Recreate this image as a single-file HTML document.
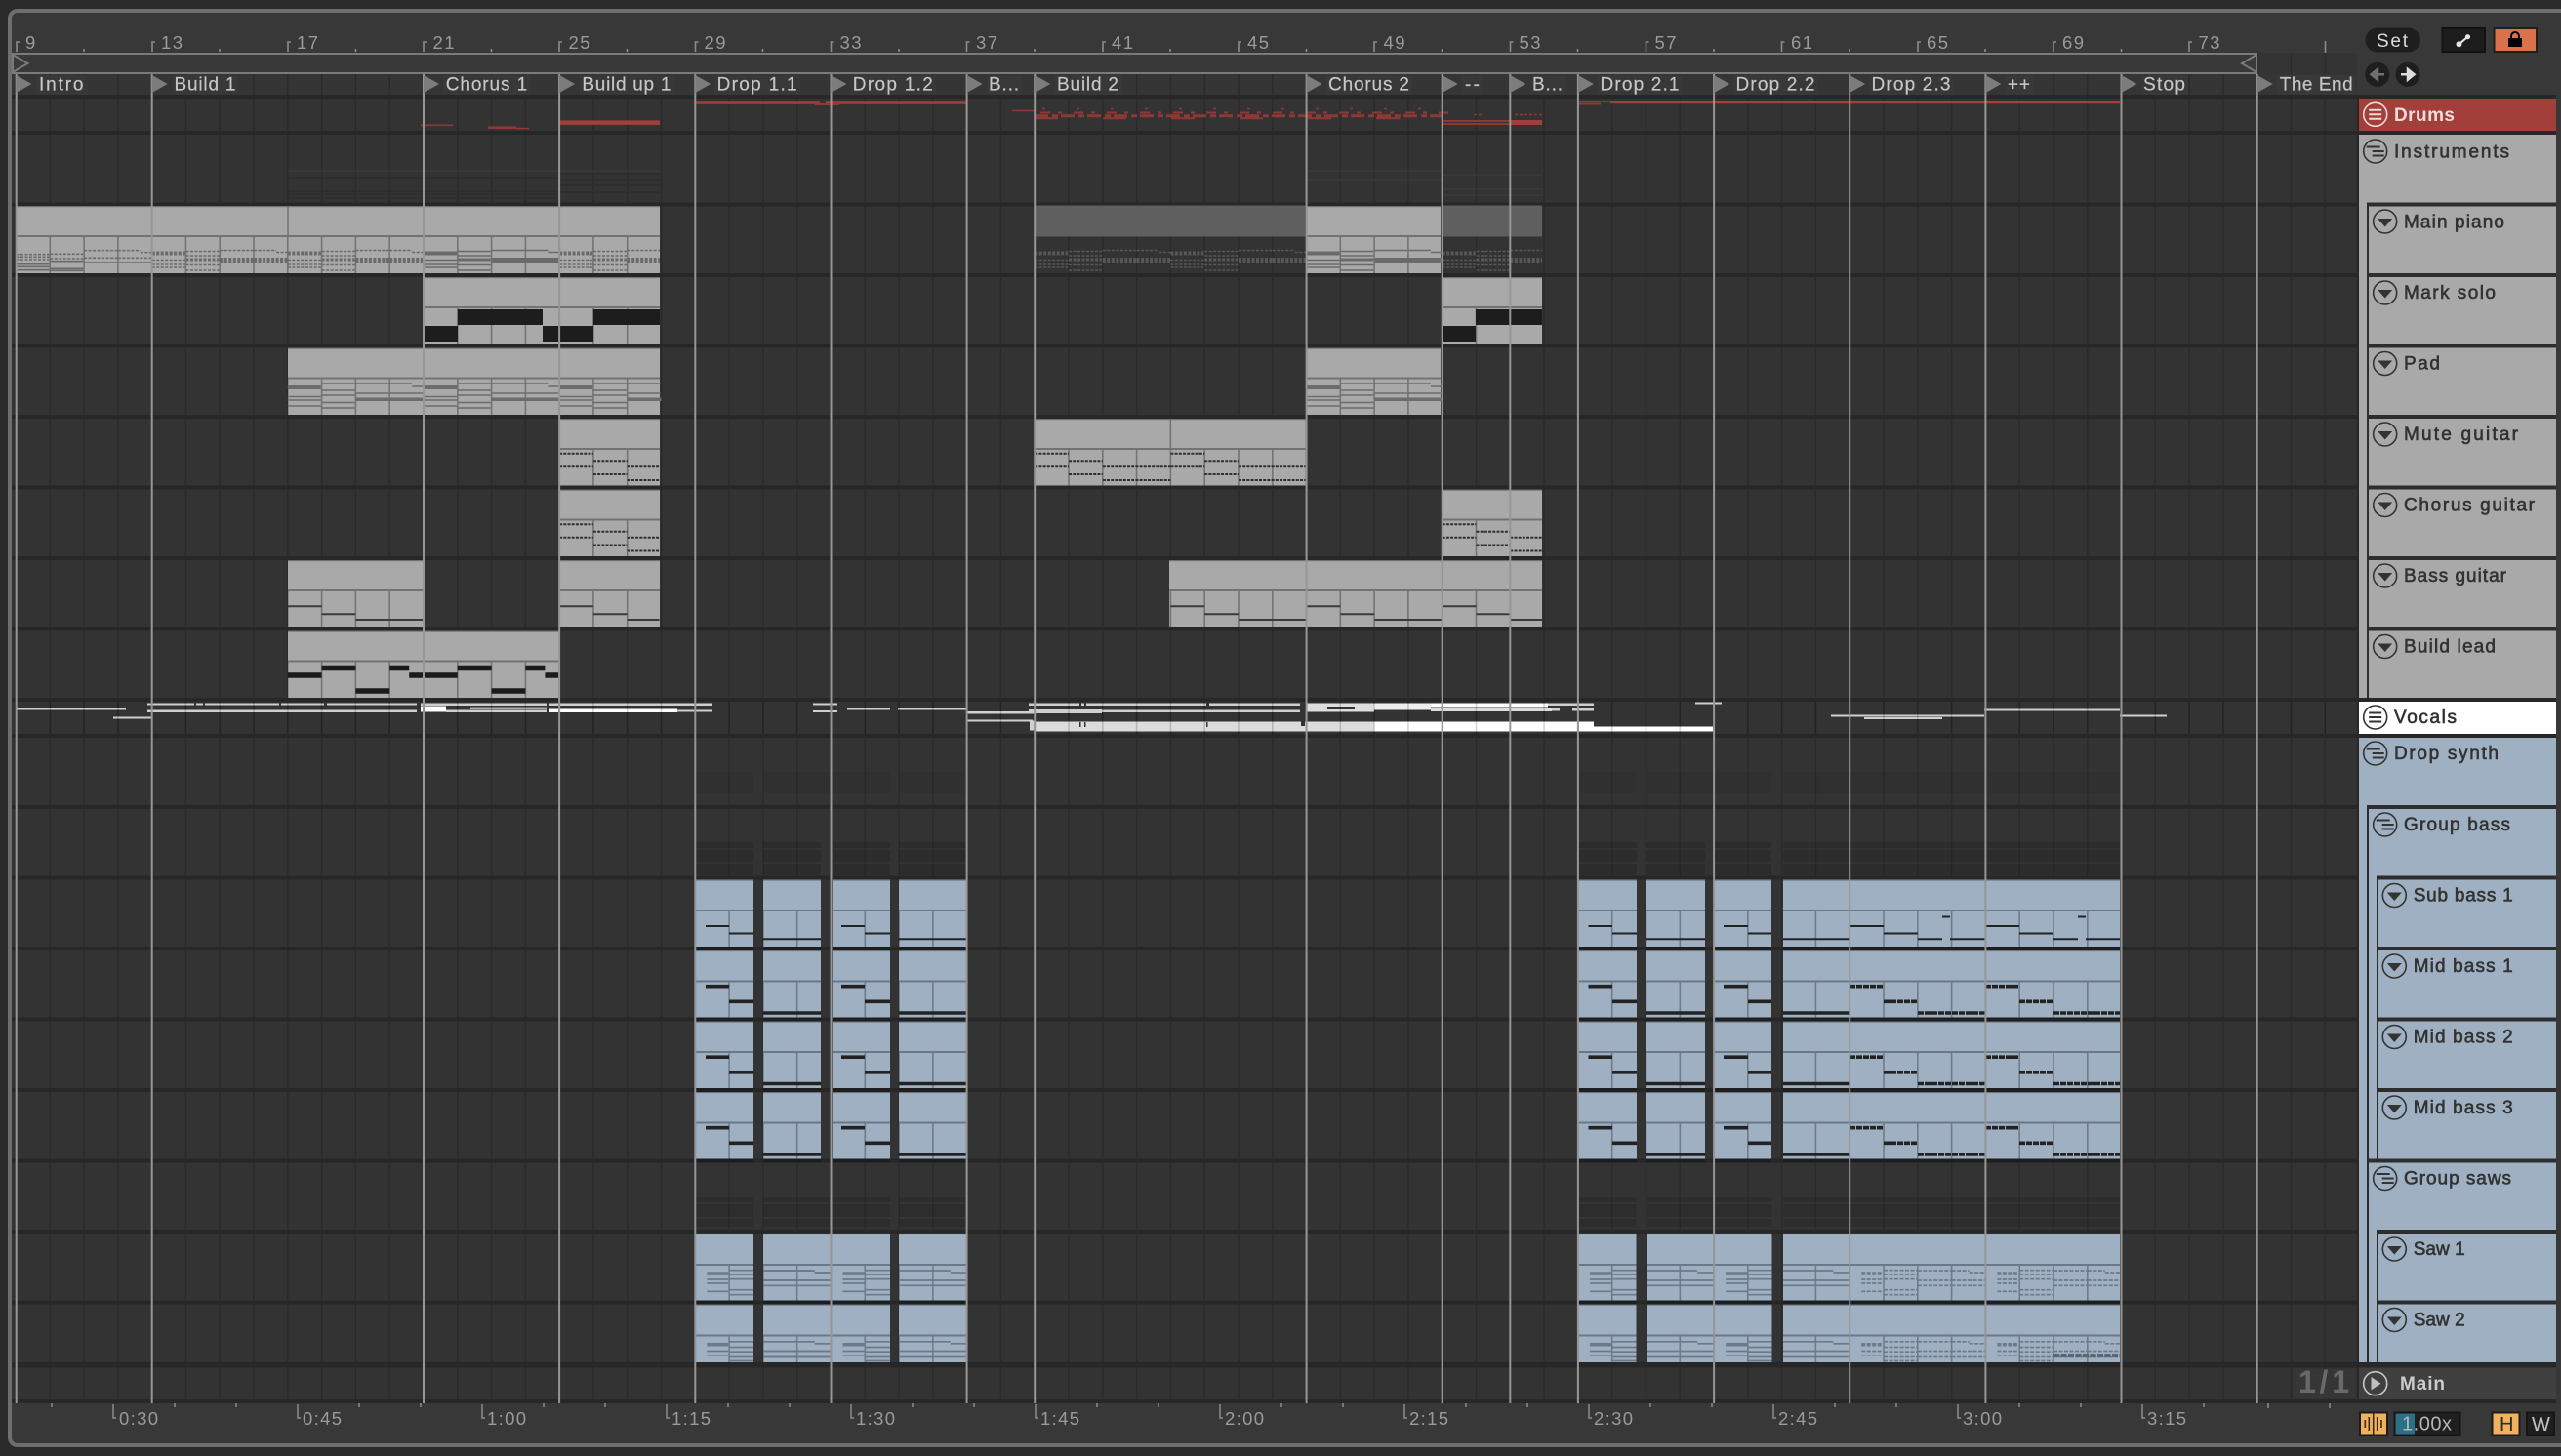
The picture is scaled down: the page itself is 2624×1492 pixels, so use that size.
<!DOCTYPE html>
<html><head><meta charset="utf-8"><title>Arrangement</title>
<style>
html,body{margin:0;padding:0;background:#2b2b2b;width:2624px;height:1492px;overflow:hidden}
svg{display:block;font-family:"Liberation Sans",sans-serif}
.l{font-size:19px;fill:#c6c6c6;stroke:#c6c6c6;stroke-width:.2}
.n{font-size:18.5px;fill:#9a9a9a}
.t{font-size:19px;fill:#333;stroke:#333;stroke-width:.6}
.i{fill:none;stroke:#333;stroke-width:1.6}
</style></head><body>
<svg xmlns="http://www.w3.org/2000/svg" width="2624" height="1492" viewBox="0 0 2624 1492">
<defs>
<path id="v" fill="none" d="M16.5 0V1500M51.3 0V1500M86.1 0V1500M120.9 0V1500M155.7 0V1500M190.4 0V1500M225.2 0V1500M260 0V1500M294.8 0V1500M329.6 0V1500M364.4 0V1500M399.2 0V1500M434 0V1500M468.8 0V1500M503.6 0V1500M538.4 0V1500M573.1 0V1500M607.9 0V1500M642.7 0V1500M677.5 0V1500M712.3 0V1500M747.1 0V1500M781.9 0V1500M816.7 0V1500M851.5 0V1500M886.3 0V1500M921.1 0V1500M955.9 0V1500M990.6 0V1500M1025.4 0V1500M1060.2 0V1500M1095 0V1500M1129.8 0V1500M1164.6 0V1500M1199.4 0V1500M1234.2 0V1500M1269 0V1500M1303.8 0V1500M1338.6 0V1500M1373.3 0V1500M1408.1 0V1500M1442.9 0V1500M1477.7 0V1500M1512.5 0V1500M1547.3 0V1500M1582.1 0V1500M1616.9 0V1500M1651.7 0V1500M1686.5 0V1500M1721.3 0V1500M1756.1 0V1500M1790.8 0V1500M1825.6 0V1500M1860.4 0V1500M1895.2 0V1500M1930 0V1500M1964.8 0V1500M1999.6 0V1500M2034.4 0V1500M2069.2 0V1500M2104 0V1500M2138.8 0V1500M2173.5 0V1500M2208.3 0V1500M2243.1 0V1500M2277.9 0V1500M2312.7 0V1500M2347.5 0V1500M2382.3 0V1500"/>
<clipPath id="gridC"><rect x="14" y="76" width="2401" height="1362"/><rect x="2313" y="54" width="102" height="22"/></clipPath>
<clipPath id="vocC"><rect x="14" y="719" width="2400" height="33"/></clipPath>
<clipPath id="grayN">
<rect x="16.5" y="243" width="659.5" height="37"/><rect x="1338.6" y="243" width="137.4" height="37"/>
<rect x="434" y="316" width="242" height="36.5"/><rect x="1478" y="316" width="102" height="36.5"/>
<rect x="295" y="388.5" width="381" height="36.5"/><rect x="1338.6" y="388.5" width="137.4" height="36.5"/>
<rect x="573" y="461" width="103" height="36.5"/><rect x="1060" y="461" width="277" height="36.5"/>
<rect x="573" y="533.5" width="103" height="36.5"/><rect x="1478" y="533.5" width="102" height="36.5"/>
<rect x="295" y="606" width="139" height="36.5"/><rect x="573" y="606" width="103" height="36.5"/><rect x="1198" y="606" width="382" height="36.5"/>
<rect x="295" y="678.5" width="278" height="36.5"/>
</clipPath>
<clipPath id="blueN">
<rect x="713" y="934" width="1460" height="36"/><rect x="713" y="1006" width="1460" height="36.5"/><rect x="713" y="1079" width="1460" height="36"/><rect x="713" y="1151.5" width="1460" height="36"/><rect x="713" y="1296" width="1460" height="36.5"/><rect x="713" y="1368.5" width="1460" height="27.5"/>
</clipPath>
<clipPath id="sawX">
<rect x="713" y="1200" width="59" height="200"/><rect x="782" y="1200" width="130" height="200"/><rect x="921" y="1200" width="69" height="200"/><rect x="1617" y="1200" width="59.5" height="200"/><rect x="1688" y="1200" width="127.5" height="200"/><rect x="1827" y="1200" width="345" height="200"/>
</clipPath>
<clipPath id="pianoX"><rect x="16.5" y="200" width="659.5" height="80"/><rect x="1060" y="200" width="520" height="80"/></clipPath>
<clipPath id="blueB">
<rect x="713" y="934" width="59" height="254"/><rect x="782" y="934" width="59" height="254"/><rect x="853" y="934" width="59" height="254"/><rect x="921" y="934" width="69" height="254"/><rect x="1617" y="934" width="60" height="254"/><rect x="1687" y="934" width="60" height="254"/><rect x="1757" y="934" width="58" height="254"/><rect x="1827" y="934" width="345" height="254"/>
<rect x="713" y="1296" width="59" height="100"/><rect x="782" y="1296" width="130" height="100"/><rect x="921" y="1296" width="69" height="100"/><rect x="1617" y="1296" width="59.5" height="100"/><rect x="1688" y="1296" width="127.5" height="100"/><rect x="1827" y="1296" width="345" height="100"/>
</clipPath>

<path id="rngB" fill="none" d="M713 0H772M782 0H841M853 0H912M921 0H990M1617 0H1677M1687 0H1747M1757 0H1815M1827 0H2172"/>
<path id="rngS" fill="none" d="M713 0H772M782 0H912M921 0H990M1617 0H1676.5M1688 0H1815.5M1827 0H2172"/>

<!-- piano bars -->
<g id="a1" fill="none"><path stroke-dasharray="3 1.5" d="M0 49.7H34M0 52.3H34M0 55H34"/><path d="M0 59.7H34M0 62.3H34M0 65.7H34"/></g>
<g id="b1" fill="none"><path stroke-dasharray="3 1.5" d="M0 49.3H34M0 54H34"/><path d="M0 56.7H34M0 64.3H34M0 66.3H34"/></g>
<g id="c1" fill="none"><path stroke-dasharray="3 1.5" d="M0 45.7H34M0 53.3H34"/><path d="M0 58H34"/></g>
<g id="d1" fill="none"><path stroke-dasharray="3 1.5" d="M0 45.7H23M23 47.7H34.8M0 53.3H34"/><path d="M0 58H34.8"/></g>
<g id="a" fill="none"><path stroke-width="4" d="M0 48.5H34"/><path d="M0 55.5H34M0 60H34M0 63H34"/></g>
<g id="b" fill="none"><path d="M0 46.5H34M0 51H34M0 60.5H34M0 66H34"/><path stroke-width="3" d="M0 55H34"/></g>
<g id="c" fill="none"><path d="M0 45.5H34"/><path stroke-width="5" d="M0 55.5H34.8"/></g>
<g id="d" fill="none"><path d="M0 45.5H23M23 47.5H34.8"/><path stroke-width="5" d="M0 55.5H34.8"/></g>
<g id="P"><use href="#a"/><use href="#b" x="34.8"/><use href="#c" x="69.6"/><use href="#d" x="104.4"/></g>
<g id="P3"><use href="#a"/><use href="#b" x="34.8"/><use href="#c" x="69.6"/></g>
<!-- pad -->
<g id="pa" fill="none"><path stroke-width="4" d="M0 40.5H34"/><path d="M0 50H34M0 53.5H34M0 59.5H34"/></g>
<g id="pb" fill="none"><path d="M0 36.5H34M0 43.5H34M0 48.5H34M0 56H34M0 61.5H34"/></g>
<g id="pc" fill="none"><path d="M0 36.5H34M0 46.5H34"/><path stroke-width="3.5" d="M0 52.8H34.8"/></g>
<g id="pd" fill="none"><path d="M0 36.5H23M23 39.5H34M0 46.5H34"/><path stroke-width="3.5" d="M0 52.8H34.8"/></g>
<g id="Q"><use href="#pa"/><use href="#pb" x="34.8"/><use href="#pc" x="69.6"/><use href="#pd" x="104.4"/></g>
<g id="Q3"><use href="#pa"/><use href="#pb" x="34.8"/><use href="#pc" x="69.6"/></g>
<!-- saws -->
<g id="sa" fill="none"><path stroke-width="3.5" d="M12 41H34"/><path d="M12 47H34M12 51H34M12 59.3H34"/></g>
<g id="sb" fill="none"><path d="M0 37.7H34M0 42H34M0 46.7H34M0 57.7H34M0 62.7H34"/></g>
<g id="sc" fill="none"><path d="M0 38H34.8M0 48H34.8M0 53.3H34.8"/></g>
<g id="sd" fill="none"><path d="M0 38H18M18 40H34.8M0 48H34.8M0 53.3H34.8"/></g>
<g id="S4"><use href="#sa"/><use href="#sb" x="34.8"/><use href="#sc" x="69.6"/><use href="#sd" x="104.4"/></g>
<g id="ta" fill="none"><path stroke-width="3.5" d="M12 41.3H34"/><path d="M12 48H34M12 52.3H34"/></g>
<g id="tb" fill="none"><path d="M0 38.3H34M0 44H34M0 48.7H34M0 54H34M0 58H34"/></g>
<g id="tc" fill="none"><path d="M0 38.3H34.8M0 48H34.8M0 54H34.8"/></g>
<g id="td" fill="none"><path d="M0 38.3H18M18 40.3H34.8M0 48H34.8M0 54H34.8"/></g>
<g id="T4"><use href="#ta"/><use href="#tb" x="34.8"/><use href="#tc" x="69.6"/><use href="#td" x="104.4"/></g>
<g id="Sall"><use href="#S4" x="712.3"/><use href="#sc" x="781.9"/><use href="#sd" x="816.7"/><use href="#sa" x="851.5"/><use href="#sb" x="886.3"/><use href="#sc" x="921.1"/><use href="#sd" x="955.9"/><use href="#sa" x="1616.9"/><use href="#sb" x="1651.7"/><use href="#sc" x="1686.5"/><use href="#sd" x="1721.3"/><use href="#sa" x="1756.1"/><use href="#sb" x="1790.8"/><use href="#sc" x="1825.6"/><use href="#sd" x="1860.4"/><g stroke-dasharray="4 1.5"><use href="#S4" x="1895.2"/><use href="#S4" x="2034.4"/></g></g>
<g id="Tall"><use href="#T4" x="712.3"/><use href="#tc" x="781.9"/><use href="#td" x="816.7"/><use href="#ta" x="851.5"/><use href="#tb" x="886.3"/><use href="#tc" x="921.1"/><use href="#td" x="955.9"/><use href="#ta" x="1616.9"/><use href="#tb" x="1651.7"/><use href="#tc" x="1686.5"/><use href="#td" x="1721.3"/><use href="#tb" x="1790.8"/><use href="#ta" x="1756.1"/><use href="#tc" x="1825.6"/><use href="#td" x="1860.4"/><g stroke-dasharray="4 1.5"><use href="#T4" x="1895.2"/><use href="#T4" x="2034.4"/></g></g>
<!-- guitar -->
<path id="mg" fill="none" stroke-dasharray="3 1.2" d="M0 35.7H34.8M0 49.3H34.8M34.8 43.3H69.6M34.8 57H69.6M69.6 49.3H139M69.6 63H139"/>
<path id="mg3" fill="none" stroke-dasharray="3 1.2" d="M0 35.7H34.8M0 49.3H34.8M34.8 43.3H69.6M34.8 57H69.6M69.6 49.3H102.5M69.6 63H102.5"/>
<path id="bs" fill="none" d="M0 47.3H34.8M34.8 55.3H69.6M69.6 61H139"/>
<path id="bs3" fill="none" d="M0 47.3H34.8M34.8 55.3H69.6M69.6 61H102.5"/>
<path id="lead" fill="none" d="M0 45.5H34.8M34.8 38H69.6M69.6 61.5H104.4M104.4 38H124.4M124.4 45.5H139"/>
<!-- bass -->
<path id="bThin" fill="none" d="M723 47.5H747M747 55H772M782 60.8H841M862 47.5H886M886 55H912M921 60.8H990M1627.5 47.5H1652M1652 55H1677M1687 60.8H1747M1766 47.5H1791M1791 55H1815M1827 60.8H1895M1895 47.5H1930M1930 55H1965M1965 60.8H1990M1990 38H1998M1998 60.8H2034M2034 47.5H2069M2069 55H2104M2104 60.8H2129M2129 38H2137M2137 60.8H2172"/>
<path id="bFat" fill="none" d="M723 36.7H747M747 52.3H772M782 64H841M862 36.7H886M886 52.3H912M921 64H990M1627.5 36.7H1652M1652 52.3H1677M1687 64H1747M1766 36.7H1791M1791 52.3H1815M1827 64H1895"/>
<path id="bDash" fill="none" stroke-dasharray="6 1" d="M1895 36.7H1930M1930 52.3H1964M1965 64H2034M2034 36.7H2069M2069 52.3H2103M2104 64H2172"/>
<!-- icons -->
<g id="iEq" fill="none"><circle r="12"/><path d="M-6.5 -4.5H6.5M-6.5 0H6.5M-6.5 4.5H6.5" stroke-width="2"/></g>
<g id="iGr" fill="none"><circle r="12"/><path d="M-9 -4.5H5M-3 0H9M-3 4.5H9" stroke-width="2"/></g>
<g id="iDn"><circle r="12" fill="none"/><path d="M-7.5 -3H7.5L0 5.5Z" fill="#333" stroke="none"/></g>
</defs>

<!-- frame -->
<rect width="2624" height="1492" fill="#2b2b2b"/>
<rect x="10" y="11" width="2700" height="1470" rx="8" fill="#383838" stroke="#6e6e6e" stroke-width="4"/>

<!-- grid -->
<rect x="12" y="97" width="2403" height="1341" fill="#333333"/>
<rect x="12" y="76" width="2403" height="21" fill="#353535"/>
<rect x="2313" y="54" width="102" height="22" fill="#343434"/>
<use href="#v" stroke="#2a2a2a" stroke-width="1.4" clip-path="url(#gridC)"/>
<g fill="#272727">
<rect x="12" y="97" width="2403" height="4"/><rect x="12" y="134" width="2403" height="4"/><rect x="12" y="207.5" width="2403" height="4"/><rect x="12" y="280" width="2403" height="4"/><rect x="12" y="352.5" width="2403" height="4"/><rect x="12" y="425" width="2403" height="4"/><rect x="12" y="497.5" width="2403" height="4"/><rect x="12" y="570" width="2403" height="4"/><rect x="12" y="642.5" width="2403" height="4"/><rect x="12" y="715" width="2403" height="4"/><rect x="12" y="752" width="2403" height="4"/><rect x="12" y="825" width="2403" height="4"/><rect x="12" y="897.5" width="2403" height="4"/><rect x="12" y="970" width="2403" height="4"/><rect x="12" y="1042.5" width="2403" height="4"/><rect x="12" y="1115" width="2403" height="4"/><rect x="12" y="1187.5" width="2403" height="4"/><rect x="12" y="1260" width="2403" height="4"/><rect x="12" y="1332.5" width="2403" height="4"/><rect x="12" y="1396" width="2403" height="5.5"/><rect x="12" y="1434" width="2403" height="4"/>
</g>

<!-- top ruler -->
<g stroke="#8c8c8c" stroke-width="1.6" fill="none">
<path d="M17 53V43h3M156 53V43h3M295 53V43h3M434 53V43h3M573 53V43h3M712.5 53V43h3M851.5 53V43h3M990.5 53V43h3M1130 53V43h3M1269 53V43h3M1408 53V43h3M1547.5 53V43h3M1686.5 53V43h3M1825.5 53V43h3M1965 53V43h3M2104 53V43h3M2243 53V43h3M2382.5 54V42"/>
<path d="M86 53V50M225 53V50M364.5 53V50M503.5 53V50M642.5 53V50M781.5 53V50M921 53V50M1060 53V50M1199 53V50M1338.5 53V50M1477.5 53V50M1616.5 53V50M1756 53V50M1895 53V50M2034 53V50M2173.5 53V50"/>
</g>
<text class="n" x="26" y="50">9</text><text class="n" x="165" y="50" textLength="22">13</text><text class="n" x="304" y="50" textLength="22">17</text><text class="n" x="443.5" y="50" textLength="22">21</text><text class="n" x="582.5" y="50" textLength="22">25</text><text class="n" x="721.5" y="50" textLength="22">29</text><text class="n" x="860.5" y="50" textLength="22">33</text><text class="n" x="1000" y="50" textLength="22">37</text><text class="n" x="1139" y="50" textLength="22">41</text><text class="n" x="1278" y="50" textLength="22">45</text><text class="n" x="1417.5" y="50" textLength="22">49</text><text class="n" x="1556.5" y="50" textLength="22">53</text><text class="n" x="1695.5" y="50" textLength="22">57</text><text class="n" x="1835" y="50" textLength="22">61</text><text class="n" x="1974" y="50" textLength="22">65</text><text class="n" x="2113" y="50" textLength="22">69</text><text class="n" x="2252.5" y="50" textLength="22">73</text>
<!-- loop brace -->
<path d="M13 55H2312V75H13Z" fill="#383838" stroke="#7a7a7a" stroke-width="2"/>
<path d="M13 56L28.5 65L13 74Z" fill="#3a3a3a" stroke="#7a7a7a" stroke-width="2"/>
<path d="M2312 56L2297 65L2312 74Z" fill="#3a3a3a" stroke="#7a7a7a" stroke-width="2"/>

<!-- drums notes -->
<g fill="none" stroke="#8f3834">
<path stroke-width="1.6" d="M431 128.3H464"/><path stroke-width="2.6" d="M500 130.7H529"/><path stroke-width="1.6" d="M529 131.6H542"/>
<path stroke="#a33e3a" stroke-width="4.5" d="M574 125.6H676"/>
<path stroke="#a33e3a" stroke-width="2.6" d="M712 105.5H840M846 105.5H990"/><path stroke-width="2" d="M835 107H860"/>
<path stroke="#a33e3a" stroke-width="2.6" d="M1650 105H2172"/><path stroke-width="2" d="M1617 104H1650M1617 106.5H1640"/>
<path stroke-width="1.6" d="M1037 113.5H1060"/>
<path stroke-width="3" stroke-dasharray="14 4 6 3" d="M1060 118.7H1478"/>
<path stroke-width="2" stroke-dasharray="10 8 4 12" d="M1066 115.5H1490"/>
<path stroke-width="2" stroke-dasharray="24 46" d="M1060 121.2H1478"/>
<path stroke-width="1.5" stroke-dasharray="3 32" d="M1068 111.5H1470"/>
<path stroke-width="2" d="M1478 124H1547M1478 127H1547"/><path stroke="#a33e3a" stroke-width="5" d="M1547 125.5H1580"/>
<path stroke-width="1.6" stroke-dasharray="3 2" d="M1510 117.5H1518M1552 117.5H1580"/>
</g>
<!-- faint -->
<g fill="none">
<path stroke="#2d2d2d" stroke-width="1.5" d="M295 182H574M295 196H573M295 199H573M295 203H573M574 178H676M574 184H676M574 190H676M574 197H676"/>
<path stroke="#3a3a3a" stroke-width="1.5" d="M295 175H676M1338 175H1478M1338 184H1478M1478 179H1580M1478 194H1580M1478 200H1580"/>
<use href="#rngS" y="802" stroke="#000" stroke-opacity=".06" stroke-width="22"/>
<use href="#rngB" y="880" stroke="#000" stroke-opacity=".13" stroke-width="34"/>
<use href="#rngB" y="870" stroke="#fff" stroke-opacity=".04" stroke-width="2"/>
<use href="#rngB" y="884" stroke="#fff" stroke-opacity=".04" stroke-width="2"/>
<use href="#rngS" y="1242" stroke="#000" stroke-opacity=".11" stroke-width="30"/>
<use href="#rngS" y="1233" stroke="#fff" stroke-opacity=".04" stroke-width="2"/>
<use href="#rngS" y="1248" stroke="#fff" stroke-opacity=".04" stroke-width="2"/>
</g>

<!-- gray clips -->
<g fill="#a9a9a9">
<rect x="16.5" y="212" width="659.5" height="68"/><rect x="1338.6" y="212" width="137.4" height="68"/>
<rect x="434" y="285" width="242" height="67.5"/><rect x="1478" y="285" width="102" height="67.5"/>
<rect x="295" y="357.5" width="381" height="67.5"/><rect x="1338.6" y="357.5" width="137.4" height="67.5"/>
<rect x="573" y="430" width="103" height="67.5"/><rect x="1060" y="430" width="277.5" height="67.5"/>
<rect x="573" y="502.5" width="103" height="67.5"/><rect x="1478" y="502.5" width="102" height="67.5"/>
<rect x="295" y="575" width="139" height="67.5"/><rect x="573" y="575" width="103" height="67.5"/><rect x="1198" y="575" width="382" height="67.5"/>
<rect x="295" y="647.5" width="278" height="67.5"/>
</g>
<g fill="#5f5f5f"><rect x="1060.5" y="210.5" width="277" height="32"/><rect x="1478" y="210.5" width="102" height="32"/></g>
<g fill="#727272">
<rect x="16.5" y="241" width="659.5" height="2"/><rect x="1338.6" y="241" width="137.4" height="2"/>
<rect x="434" y="314" width="242" height="2"/><rect x="1478" y="314" width="102" height="2"/>
<rect x="295" y="386.5" width="381" height="2"/><rect x="1338.6" y="386.5" width="137.4" height="2"/>
<rect x="573" y="459" width="103" height="2"/><rect x="1060" y="459" width="277.5" height="2"/>
<rect x="573" y="531.5" width="103" height="2"/><rect x="1478" y="531.5" width="102" height="2"/>
<rect x="295" y="604" width="139" height="2"/><rect x="573" y="604" width="103" height="2"/><rect x="1198" y="604" width="382" height="2"/>
<rect x="295" y="676.5" width="278" height="2"/>
<rect x="16.5" y="211" width="659.5" height="1.2"/><rect x="1338.6" y="211" width="137.4" height="1.2"/>
<rect x="434" y="284" width="242" height="1.2"/><rect x="1478" y="284" width="102" height="1.2"/>
<rect x="295" y="356.5" width="381" height="1.2"/><rect x="1338.6" y="356.5" width="137.4" height="1.2"/>
<rect x="573" y="429" width="103" height="1.2"/><rect x="1060" y="429" width="277.5" height="1.2"/>
<rect x="573" y="501.5" width="103" height="1.2"/><rect x="1478" y="501.5" width="102" height="1.2"/>
<rect x="295" y="574" width="139" height="1.2"/><rect x="573" y="574" width="103" height="1.2"/><rect x="1198" y="574" width="382" height="1.2"/>
<rect x="295" y="646.5" width="278" height="1.2"/>
<rect x="294.3" y="212" width="1.5" height="30"/><rect x="1198.6" y="430" width="1.5" height="30"/><rect x="433.4" y="647" width="1.5" height="30"/>
</g>
<use href="#v" stroke="#747474" stroke-width="1.6" clip-path="url(#grayN)"/>

<!-- piano -->
<g stroke="#6a6a6a" stroke-width="1.6" clip-path="url(#pianoX)">
<g transform="translate(0 211)">
<use href="#a1" x="16.5"/><use href="#b1" x="51.3"/><use href="#c1" x="86.1"/><use href="#d1" x="120.9"/>
<g stroke-dasharray="3 1.5"><use href="#P" x="155.7"/><use href="#P" x="294.8"/><use href="#P3" x="573.1"/></g>
<use href="#P" x="434"/><use href="#P" x="1338.6"/>
<g stroke="#575757" stroke-dasharray="3 1.5"><use href="#P" x="1060.2"/><use href="#P" x="1199.4"/><use href="#P3" x="1477.7"/></g>
</g></g>
<!-- mark solo -->
<path fill="none" stroke="#1d1d1d" stroke-width="16" d="M434 342H469M469 325H556M556 342H608M608 325H676M1478 342H1512M1512 325H1580"/>
<!-- pad -->
<g stroke="#6c6c6c" stroke-width="1.6" transform="translate(0 356.5)">
<use href="#Q" x="294.8"/><use href="#Q" x="434"/><use href="#Q3" x="573.1"/><use href="#Q" x="1338.6"/>
</g>
<!-- guitars -->
<g stroke="#303030" stroke-width="2">
<use href="#mg3" x="573.1" y="429"/><use href="#mg" x="1060.2" y="429"/><use href="#mg" x="1199.4" y="429"/>
<use href="#mg3" x="573.1" y="501.5"/><use href="#mg3" x="1477.7" y="501.5"/>
</g>
<g stroke="#3a3a3a" stroke-width="2">
<use href="#bs" x="294.8" y="574"/><use href="#bs3" x="573.1" y="574"/><use href="#bs" x="1199.4" y="574"/><use href="#bs" x="1338.6" y="574"/><use href="#bs3" x="1477.7" y="574"/>
</g>
<g stroke="#1b1b1b" stroke-width="5.5">
<use href="#lead" x="294.8" y="646.5"/><use href="#lead" x="434" y="646.5"/>
</g>

<!-- blue clips -->
<g fill="#9fb0c2">
<g id="blueRow"><rect x="713" y="902.5" width="59" height="67.5"/><rect x="782" y="902.5" width="59" height="67.5"/><rect x="853" y="902.5" width="59" height="67.5"/><rect x="921" y="902.5" width="69" height="67.5"/><rect x="1617" y="902.5" width="60" height="67.5"/><rect x="1687" y="902.5" width="60" height="67.5"/><rect x="1757" y="902.5" width="58" height="67.5"/><rect x="1827" y="902.5" width="345" height="67.5"/></g>
<use href="#blueRow" y="72.5"/><use href="#blueRow" y="145"/><use href="#blueRow" y="217.5"/>
<g clip-path="url(#sawX)"><rect x="700" y="1265" width="1480" height="67.5"/><rect x="700" y="1337.5" width="1480" height="58.5"/></g>
</g>
<g fill="none" stroke="#6b7886" stroke-width="2">
<use href="#rngB" y="933"/><use href="#rngB" y="1005.5"/><use href="#rngB" y="1078"/><use href="#rngB" y="1150.5"/><use href="#rngS" y="1296"/><use href="#rngS" y="1368.5"/>
</g>
<g fill="none" stroke="#6b7886" stroke-width="1.2">
<use href="#rngB" y="902"/><use href="#rngB" y="974.5"/><use href="#rngB" y="1047"/><use href="#rngB" y="1119.5"/><use href="#rngS" y="1264.5"/><use href="#rngS" y="1337"/>
</g>
<g clip-path="url(#blueB)"><use href="#v" stroke="#6f7c8a" stroke-width="1.6" clip-path="url(#blueN)"/></g>
<!-- bass notes -->
<g stroke="#222">
<use href="#bThin" y="901.5" stroke-width="2"/>
<g stroke-width="3.6">
<use href="#bFat" y="974"/><use href="#bFat" y="1046.5"/><use href="#bFat" y="1119"/>
<use href="#bDash" y="974"/><use href="#bDash" y="1046.5"/><use href="#bDash" y="1119"/>
</g>
</g>
<!-- saw notes -->
<g clip-path="url(#sawX)" stroke="#6c7a88" stroke-width="1.7">
<use href="#Sall" y="1264"/><use href="#Tall" y="1336.5"/>
<path stroke="#5a6672" stroke-width="4" stroke-dasharray="6 1.5" d="M2104 1389H2172"/>
</g>
<g stroke="#1e1e1e" stroke-width="4" fill="none">
<use href="#rngB" y="972"/><use href="#rngB" y="1044.5"/><use href="#rngB" y="1117"/><use href="#rngB" y="1189.5"/><use href="#rngS" y="1334.5"/>
</g>
<rect x="12" y="1396" width="2403" height="5.5" fill="#272727"/>

<!-- vocals -->
<g fill="#cfcfcf">
<rect x="17" y="725.5" width="112" height="2"/><rect x="116" y="734.5" width="39" height="2"/>
<rect x="151" y="720.5" width="48" height="2"/><rect x="201" y="720.5" width="7" height="2"/><rect x="210" y="720.5" width="76" height="2"/><rect x="288" y="720.5" width="44" height="2"/><rect x="335" y="720.5" width="92" height="2"/>
<rect x="151" y="727.5" width="276" height="2.5"/>
<rect x="431" y="720.5" width="129" height="2.5"/><rect x="482" y="724.5" width="78" height="2.5" fill="#aaa"/><rect x="457" y="727.5" width="103" height="2.5"/>
<rect x="562" y="720.5" width="168" height="2.5"/><rect x="694" y="727.5" width="36" height="2"/>
<rect x="833" y="720.5" width="25" height="2"/><rect x="833" y="728" width="25" height="2"/><rect x="868" y="725.5" width="44" height="2"/><rect x="920" y="725.5" width="70" height="2"/>
<rect x="990" y="729" width="70" height="2.5"/><rect x="990" y="737.5" width="68" height="2"/>
<rect x="1054" y="720.5" width="52" height="2.5"/><rect x="1108" y="720.5" width="3" height="2.5"/><rect x="1113" y="720.5" width="123" height="2.5"/><rect x="1239" y="720.5" width="93" height="2.5"/>
<rect x="1054" y="727" width="75" height="4"/><rect x="1129" y="727.5" width="203" height="2.5"/>
<rect x="1055" y="738.5" width="5" height="10"/>
<rect x="1586" y="720.5" width="47" height="2.5"/><rect x="1586" y="726" width="12" height="2.5"/><rect x="1611" y="726" width="22" height="2.5"/>
<rect x="1737" y="719.5" width="27" height="2"/><rect x="1876" y="732.5" width="157" height="2"/><rect x="1910" y="735" width="80" height="2"/><rect x="2033" y="726.5" width="139" height="2"/><rect x="2172" y="732.5" width="48" height="2"/>
</g>
<g fill="#fff">
<rect x="431" y="723.5" width="26" height="6"/><rect x="562" y="726.5" width="132" height="3.5"/>
<rect x="1408" y="720.5" width="58" height="7" fill="#eee"/><rect x="1466" y="720.5" width="120" height="4"/>
<rect x="1466" y="725.5" width="124" height="3.5" fill="#ddd"/>
</g>
<rect x="1338" y="720.5" width="70" height="9" fill="#ddd"/><rect x="1360" y="724" width="28" height="3" fill="#333"/>
<rect x="1060" y="739.5" width="348" height="10" fill="#dcdcdc"/><rect x="1408" y="739.5" width="225" height="10" fill="#fff"/><rect x="1633" y="744.5" width="122" height="5" fill="#fff"/>
<rect x="1106" y="740" width="1.5" height="5" fill="#333"/><rect x="1111" y="740" width="1.5" height="5" fill="#333"/><rect x="1236" y="740" width="1.5" height="5" fill="#333"/><rect x="1333" y="739" width="4" height="5" fill="#333"/>
<use href="#v" stroke="#000" stroke-opacity=".16" stroke-width="1.6" clip-path="url(#vocC)"/>

<!-- locators -->
<g fill="none" stroke="#969696" stroke-width="2">
<path d="M16.7 76V1438M155.7 76V1438M434 76V1438M573.1 76V1438M712.3 76V1438M851.5 76V1438M990.6 76V1438M1060.2 76V1438M1338.6 76V1438M1477.7 76V1438M1547.3 76V1438M1616.9 76V1438M1756.1 76V1438M1895.2 76V1438M2034.4 76V1438M2173.5 76V1438M2312.7 76V1438"/>
</g>
<g fill="#383838">
<rect x="37" y="77" width="52" height="20"/><rect x="176" y="77" width="68" height="20"/><rect x="454" y="77" width="90" height="20"/><rect x="594" y="77" width="97" height="20"/><rect x="732" y="77" width="88" height="20"/><rect x="871" y="77" width="88" height="20"/><rect x="1011" y="77" width="36" height="20"/><rect x="1081" y="77" width="68" height="20"/><rect x="1359" y="77" width="88" height="20"/><rect x="1498" y="77" width="21" height="20"/><rect x="1568" y="77" width="36" height="20"/><rect x="1637" y="77" width="86" height="20"/><rect x="1776" y="77" width="86" height="20"/><rect x="1915" y="77" width="86" height="20"/><rect x="2055" y="77" width="28" height="20"/><rect x="2194" y="77" width="48" height="20"/><rect x="2333" y="77" width="80" height="20"/>
</g>
<g fill="#7c7c7c">
<path d="M16.5 77L32.5 86L16.5 95Z"/><path d="M155.7 77L171.7 86L155.7 95Z"/><path d="M434 77L450 86L434 95Z"/><path d="M573.1 77L589.1 86L573.1 95Z"/><path d="M712.3 77L728.3 86L712.3 95Z"/><path d="M851.5 77L867.5 86L851.5 95Z"/><path d="M990.6 77L1006.6 86L990.6 95Z"/><path d="M1060.2 77L1076.2 86L1060.2 95Z"/><path d="M1338.6 77L1354.6 86L1338.6 95Z"/><path d="M1477.7 77L1493.7 86L1477.7 95Z"/><path d="M1547.3 77L1563.3 86L1547.3 95Z"/><path d="M1616.9 77L1632.9 86L1616.9 95Z"/><path d="M1756.1 77L1772.1 86L1756.1 95Z"/><path d="M1895.2 77L1911.2 86L1895.2 95Z"/><path d="M2034.4 77L2050.4 86L2034.4 95Z"/><path d="M2173.5 77L2189.5 86L2173.5 95Z"/><path d="M2312.7 77L2328.7 86L2312.7 95Z"/>
</g>
<text class="l" x="40" y="92.5" textLength="45.5">Intro</text>
<text class="l" x="178.5" y="92.5" textLength="63">Build 1</text>
<text class="l" x="456.7" y="92.5" textLength="83.5">Chorus 1</text>
<text class="l" x="596.4" y="92.5" textLength="91">Build up 1</text>
<text class="l" x="734.6" y="92.5" textLength="82">Drop 1.1</text>
<text class="l" x="873.8" y="92.5" textLength="82">Drop 1.2</text>
<text class="l" x="1013" y="92.5" textLength="31">B...</text>
<text class="l" x="1083" y="92.5" textLength="63">Build 2</text>
<text class="l" x="1361" y="92.5" textLength="83">Chorus 2</text>
<text class="l" x="1501" y="92.5" textLength="15">--</text>
<text class="l" x="1570" y="92.5" textLength="31">B...</text>
<text class="l" x="1639.5" y="92.5" textLength="81">Drop 2.1</text>
<text class="l" x="1778.5" y="92.5" textLength="81">Drop 2.2</text>
<text class="l" x="1917.5" y="92.5" textLength="81">Drop 2.3</text>
<text class="l" x="2057" y="92.5" textLength="23">++</text>
<text class="l" x="2196" y="92.5" textLength="43">Stop</text>
<text class="l" x="2335.7" y="92.5" textLength="75">The End</text>

<!-- bottom ruler -->
<g fill="none" stroke="#8c8c8c" stroke-width="1.5">
<path d="M116 1439V1453h3M305 1439V1453h3M494 1439V1453h3M683 1439V1453h3M872 1439V1453h3M1061 1439V1453h3M1250 1439V1453h3M1439 1439V1453h3M1628 1439V1453h3M1817 1439V1453h3M2006 1439V1453h3M2195 1439V1453h3"/>
<path d="M53 1438V1442M179 1438V1442M242 1438V1442M368 1438V1442M431 1438V1442M557 1438V1442M620 1438V1442M746 1438V1442M809 1438V1442M935 1438V1442M998 1438V1442M1124 1438V1442M1187 1438V1442M1313 1438V1442M1376 1438V1442M1502 1438V1442M1565 1438V1442M1691 1438V1442M1754 1438V1442M1880 1438V1442M1943 1438V1442M2069 1438V1442M2132 1438V1442M2258 1438V1442M2324 1438V1443M2387 1438V1443"/>
</g>
<text class="n" x="122" y="1460" textLength="40">0:30</text><text class="n" x="310" y="1460" textLength="40">0:45</text><text class="n" x="499" y="1460" textLength="40">1:00</text><text class="n" x="688" y="1460" textLength="40">1:15</text><text class="n" x="877" y="1460" textLength="40">1:30</text><text class="n" x="1066" y="1460" textLength="40">1:45</text><text class="n" x="1255" y="1460" textLength="40">2:00</text><text class="n" x="1444" y="1460" textLength="40">2:15</text><text class="n" x="1633" y="1460" textLength="40">2:30</text><text class="n" x="1822" y="1460" textLength="40">2:45</text><text class="n" x="2011" y="1460" textLength="40">3:00</text><text class="n" x="2200" y="1460" textLength="40">3:15</text>
<rect x="2350" y="1403" width="63" height="30" fill="#363636"/>
<text x="2355" y="1427" font-size="32" font-weight="700" fill="#696969" textLength="52">1/1</text>

<!-- track headers -->
<rect x="2415" y="97" width="2" height="1341" fill="#272727"/>
<rect x="2417" y="97" width="202" height="4" fill="#272727"/>
<rect x="2417" y="134" width="202" height="4" fill="#272727"/>
<rect x="2417" y="101" width="202" height="33" fill="#a33f3a"/>
<rect x="2417" y="138" width="202" height="577" fill="#a9a9a9"/>
<rect x="2417" y="715" width="202" height="4" fill="#272727"/>
<rect x="2417" y="719" width="202" height="33" fill="#fff"/>
<rect x="2417" y="752" width="202" height="4" fill="#272727"/>
<rect x="2417" y="756" width="202" height="640" fill="#9fb0c2"/>
<rect x="2417" y="1396" width="202" height="5.5" fill="#272727"/>
<rect x="2417" y="1401.5" width="202" height="32.5" fill="#404040"/>
<rect x="2417" y="1434" width="202" height="4" fill="#272727"/>
<g fill="#2d2d2d">
<rect x="2425" y="207.5" width="2" height="507.5"/>
<rect x="2425" y="207.5" width="194" height="4"/><rect x="2425" y="280" width="194" height="4"/><rect x="2425" y="352.5" width="194" height="4"/><rect x="2425" y="425" width="194" height="4"/><rect x="2425" y="497.5" width="194" height="4"/><rect x="2425" y="570" width="194" height="4"/><rect x="2425" y="642.5" width="194" height="4"/>
<rect x="2425" y="825" width="2" height="571"/>
<rect x="2425" y="825" width="194" height="4"/><rect x="2425" y="1187.5" width="194" height="4"/>
<rect x="2435" y="897.5" width="2" height="290"/><rect x="2435" y="1260" width="2" height="136"/>
<rect x="2435" y="897.5" width="184" height="4"/><rect x="2435" y="970" width="184" height="4"/><rect x="2435" y="1042.5" width="184" height="4"/><rect x="2435" y="1115" width="184" height="4"/><rect x="2435" y="1260" width="184" height="4"/><rect x="2435" y="1332.5" width="184" height="4"/>
</g>
<!-- header icons -->
<use href="#iEq" x="2433.7" y="117.3" stroke="#eedad8" stroke-width="1.6"/>
<g class="i">
<use href="#iGr" x="2433.7" y="155"/>
<use href="#iDn" x="2443.7" y="227"/><use href="#iDn" x="2443.7" y="300"/><use href="#iDn" x="2443.7" y="372.5"/><use href="#iDn" x="2443.7" y="445"/><use href="#iDn" x="2443.7" y="517.5"/><use href="#iDn" x="2443.7" y="590"/><use href="#iDn" x="2443.7" y="662.5"/>
<use href="#iEq" x="2433.7" y="735"/>
<use href="#iGr" x="2433.7" y="772"/>
<use href="#iGr" x="2443.7" y="845"/>
<use href="#iDn" x="2453.3" y="917.5"/><use href="#iDn" x="2453.3" y="990"/><use href="#iDn" x="2453.3" y="1062.5"/><use href="#iDn" x="2453.3" y="1135"/>
<use href="#iGr" x="2443.7" y="1207.5"/>
<use href="#iDn" x="2453.3" y="1280"/><use href="#iDn" x="2453.3" y="1352.5"/>
</g>
<circle cx="2433.7" cy="1417.7" r="12" fill="none" stroke="#c8c8c8" stroke-width="1.6"/>
<path d="M2429.5 1411L2439.5 1417.7L2429.5 1424.4Z" fill="#c0c0c0"/>
<!-- header text -->
<text x="2453" y="124" font-size="19" font-weight="700" fill="#f0dcda" textLength="62">Drums</text>
<text x="2459" y="1424" font-size="19" font-weight="700" fill="#cccccc" textLength="46">Main</text>
<text class="t" x="2453" y="161.5" textLength="118">Instruments</text>
<text class="t" x="2463" y="233.5" textLength="103">Main piano</text>
<text class="t" x="2463" y="306" textLength="94">Mark solo</text>
<text class="t" x="2463" y="378.5" textLength="37">Pad</text>
<text class="t" x="2463" y="451" textLength="117">Mute guitar</text>
<text class="t" x="2463" y="523.5" textLength="134">Chorus guitar</text>
<text class="t" x="2463" y="596" textLength="105">Bass guitar</text>
<text class="t" x="2463" y="668.5" textLength="94">Build lead</text>
<text class="t" x="2453" y="741" textLength="64">Vocals</text>
<text class="t" x="2453" y="778" textLength="107">Drop synth</text>
<text class="t" x="2463" y="851" textLength="109">Group bass</text>
<text class="t" x="2472.7" y="923.5" textLength="102">Sub bass 1</text>
<text class="t" x="2472.7" y="996" textLength="102">Mid bass 1</text>
<text class="t" x="2472.7" y="1068.5" textLength="102">Mid bass 2</text>
<text class="t" x="2472.7" y="1141" textLength="102">Mid bass 3</text>
<text class="t" x="2463" y="1213.5" textLength="110">Group saws</text>
<text class="t" x="2472.7" y="1286" textLength="53">Saw 1</text>
<text class="t" x="2472.7" y="1358.5" textLength="53">Saw 2</text>

<!-- top right controls -->
<rect x="2423.5" y="28.5" width="56.5" height="25" rx="12.5" fill="#1e1e1e"/>
<text x="2435" y="48" font-size="19" fill="#dcdcdc" textLength="32">Set</text>
<circle cx="2435.7" cy="76.3" r="12.5" fill="#1e1e1e"/>
<circle cx="2467" cy="76.3" r="12.5" fill="#1e1e1e"/>
<path d="M2443 76.3H2432M2436 71L2429.5 76.3L2436 81.6Z" fill="#6f6f6f" stroke="#6f6f6f" stroke-width="2.5"/>
<path d="M2460 76.3H2471M2467 71L2473.5 76.3L2467 81.6Z" fill="#dcdcdc" stroke="#dcdcdc" stroke-width="2.5"/>
<rect x="2502.5" y="29" width="43.5" height="24" fill="#1d1d1d" stroke="#121212" stroke-width="2"/>
<path d="M2519.5 45.3L2528.5 37.7" stroke="#e6e6e6" stroke-width="2"/>
<circle cx="2519.5" cy="45.3" r="3" fill="#e6e6e6"/><circle cx="2528.5" cy="37.7" r="2.6" fill="#e6e6e6"/>
<rect x="2555.5" y="29" width="43.5" height="24" fill="#d9714b" stroke="#1f1f1f" stroke-width="2"/>
<path d="M2573 39V37a4 4 0 0 1 8 0V39" fill="none" stroke="#000" stroke-width="2"/>
<rect x="2570" y="39" width="14" height="9" fill="#000"/>

<!-- bottom right controls -->
<rect x="2418" y="1447.5" width="28" height="23" fill="#f1b15f" stroke="#1c1c1c" stroke-width="2"/>
<path d="M2423.3 1455V1463M2427.3 1452V1466M2431.7 1448.5V1469.5M2435.7 1452V1466M2440 1455V1463" stroke="#3a2a14" stroke-width="1.6"/>
<rect x="2453.5" y="1447.5" width="67" height="23" fill="#1f1f1f" stroke="#151515" stroke-width="2"/>
<rect x="2454.5" y="1448.5" width="19.5" height="21" fill="#2c7088"/>
<text x="2461" y="1465.7" font-size="20" fill="#b6b6b6" textLength="51">1.00x</text>
<rect x="2553.5" y="1447.5" width="28" height="23" fill="#f1b15f" stroke="#1c1c1c" stroke-width="2"/>
<text x="2561" y="1466" font-size="20" fill="#2a2a2a" textLength="14">H</text>
<rect x="2589" y="1447.5" width="28" height="23" fill="#1f1f1f" stroke="#161616" stroke-width="2"/>
<text x="2594" y="1466" font-size="20" fill="#c4c4c4" textLength="19">W</text>
</svg>
</body></html>
